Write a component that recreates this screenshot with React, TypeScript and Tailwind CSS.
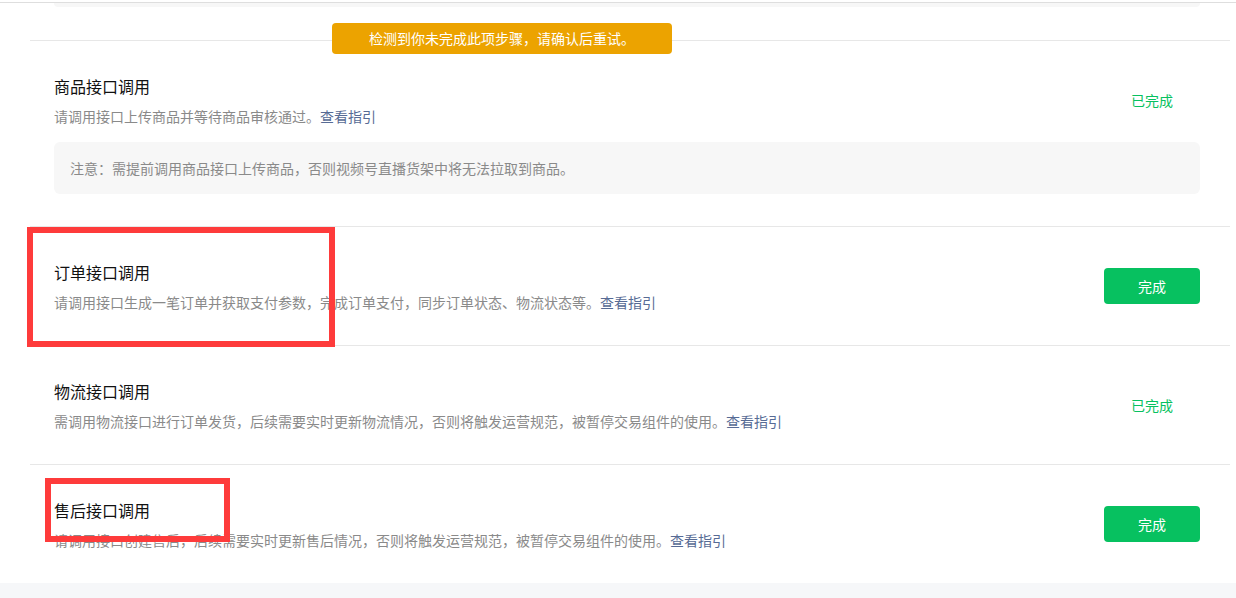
import React from 'react'

type Step = {
  title: string
  desc: string
  done: boolean
  note?: string
}

const steps: Step[] = [
  {
    title: '商品接口调用',
    desc: '请调用接口上传商品并等待商品审核通过。',
    done: true,
    note: '注意：需提前调用商品接口上传商品，否则视频号直播货架中将无法拉取到商品。',
  },
  {
    title: '订单接口调用',
    desc: '请调用接口生成一笔订单并获取支付参数，完成订单支付，同步订单状态、物流状态等。',
    done: false,
  },
  {
    title: '物流接口调用',
    desc: '需调用物流接口进行订单发货，后续需要实时更新物流情况，否则将触发运营规范，被暂停交易组件的使用。',
    done: true,
  },
  {
    title: '售后接口调用',
    desc: '请调用接口创建售后，后续需要实时更新售后情况，否则将触发运营规范，被暂停交易组件的使用。',
    done: false,
  },
]

function StepRow({ step }: { step: Step }) {
  return (
    <div className="border-t border-[#e7e7e7] pl-6 pr-[30px] py-8">
      <div className="flex items-center justify-between">
        <div>
          <h3 className="text-[16px] leading-[26px] text-[#111]">{step.title}</h3>
          <p className="mt-1.5 text-[14px] leading-[22px] text-[#8a8a8a]">
            {step.desc}
            <a className="text-[#576b95] cursor-pointer">查看指引</a>
          </p>
        </div>
        <div className="w-24 flex justify-center">
          {step.done ? (
            <span className="text-[14px] text-[#07c160]">已完成</span>
          ) : (
            <button className="w-24 h-9 rounded bg-[#07c160] text-white text-[14px]">完成</button>
          )}
        </div>
      </div>
      {step.note && (
        <div className="mt-[15px] h-[52px] rounded-md bg-[#f7f7f7] px-4 flex items-center text-[14px] text-[#8a8a8a]">
          {step.note}
        </div>
      )}
    </div>
  )
}

export default function App() {
  return (
    <div
      className="relative w-[1236px] h-[598px] overflow-hidden bg-white"
      style={{ fontFamily: '"Noto Sans CJK SC", "Noto Sans", sans-serif' }}
    >
      {/* previous card tail */}
      <div className="pt-[2px]">
        <div className="h-px bg-[#dedede]" />
        <div className="ml-[54px] w-[1146px] h-[4px] rounded-b-md bg-[#f7f7f7]" />
      </div>

      <div className="mt-[33px] ml-[30px] mr-[6px]">
        {steps.map((s) => (
          <StepRow key={s.title} step={s} />
        ))}
      </div>

      <div className="h-4 bg-[#f6f7f9]" />

      {/* warning toast */}
      <div className="absolute left-[332px] top-[23px] w-[340px] h-[31px] rounded bg-[#eca300] text-white text-[14px] flex items-center justify-center">
        检测到你未完成此项步骤，请确认后重试。
      </div>

      {/* annotation boxes */}
      <div className="absolute left-[27px] top-[227px] w-[308px] h-[120px] border-[6px] border-[#fe3b3b]" />
      <div className="absolute left-[45px] top-[478px] w-[185px] h-[64px] border-[6px] border-[#fe3b3b]" />
    </div>
  )
}
